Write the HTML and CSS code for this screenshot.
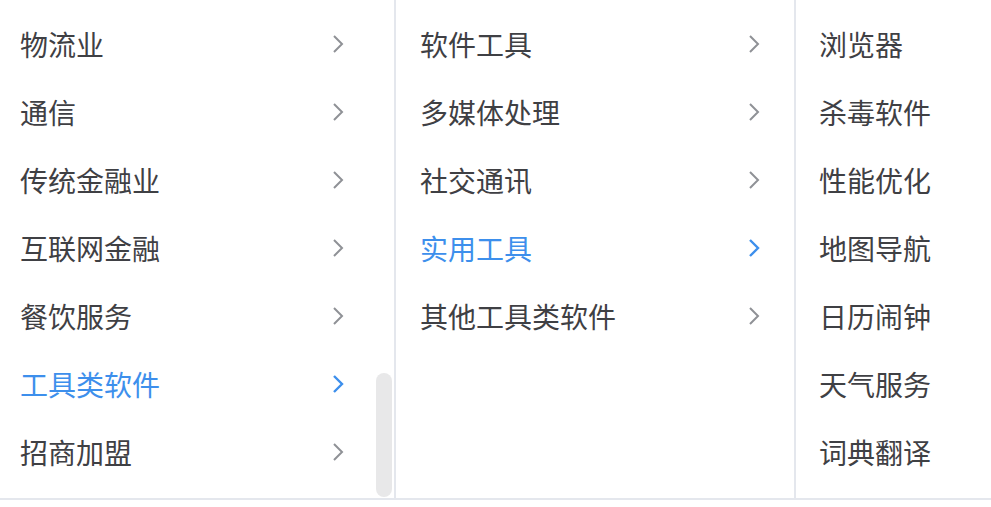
FILE: index.html
```html
<!DOCTYPE html>
<html>
    <head>
        <meta http-equiv='Content-Type' content='text/html; charset=UTF-8'>
        <title>Cascader</title>
        <link rel="stylesheet" href="styles.css">
    </head>
    <body>
        <div class='panel'>
            <div class='menu menu-1'>
                <ul class='list'>
                    <li class='node'><span>物流业</span><svg class='arrow' viewBox='0 0 12 20'><polyline points='2,2 10,10 2,18'/></svg></li>
                    <li class='node'><span>通信</span><svg class='arrow' viewBox='0 0 12 20'><polyline points='2,2 10,10 2,18'/></svg></li>
                    <li class='node'><span>传统金融业</span><svg class='arrow' viewBox='0 0 12 20'><polyline points='2,2 10,10 2,18'/></svg></li>
                    <li class='node'><span>互联网金融</span><svg class='arrow' viewBox='0 0 12 20'><polyline points='2,2 10,10 2,18'/></svg></li>
                    <li class='node'><span>餐饮服务</span><svg class='arrow' viewBox='0 0 12 20'><polyline points='2,2 10,10 2,18'/></svg></li>
                    <li class='node active'><span>工具类软件</span><svg class='arrow' viewBox='0 0 12 20'><polyline points='2,2 10,10 2,18'/></svg></li>
                    <li class='node'><span>招商加盟</span><svg class='arrow' viewBox='0 0 12 20'><polyline points='2,2 10,10 2,18'/></svg></li>
                </ul>
                <div class='thumb'></div>
            </div>
            <div class='menu menu-2'>
                <ul class='list'>
                    <li class='node'><span>软件工具</span><svg class='arrow' viewBox='0 0 12 20'><polyline points='2,2 10,10 2,18'/></svg></li>
                    <li class='node'><span>多媒体处理</span><svg class='arrow' viewBox='0 0 12 20'><polyline points='2,2 10,10 2,18'/></svg></li>
                    <li class='node'><span>社交通讯</span><svg class='arrow' viewBox='0 0 12 20'><polyline points='2,2 10,10 2,18'/></svg></li>
                    <li class='node active'><span>实用工具</span><svg class='arrow' viewBox='0 0 12 20'><polyline points='2,2 10,10 2,18'/></svg></li>
                    <li class='node'><span>其他工具类软件</span><svg class='arrow' viewBox='0 0 12 20'><polyline points='2,2 10,10 2,18'/></svg></li>
                </ul>
            </div>
            <div class='menu menu-3'>
                <ul class='list'>
                    <li class='node'><span>浏览器</span></li>
                    <li class='node'><span>杀毒软件</span></li>
                    <li class='node'><span>性能优化</span></li>
                    <li class='node'><span>地图导航</span></li>
                    <li class='node'><span>日历闹钟</span></li>
                    <li class='node'><span>天气服务</span></li>
                    <li class='node'><span>词典翻译</span></li>
                </ul>
            </div>
        </div>
    </body>
</html>
```

FILE: styles.css
```css
body {
    margin: 0;
    background: #fff;
    font-family: "Noto Sans CJK SC", "Noto Sans", sans-serif;
}
.panel {
    display: flex;
    height: 498px;
    border-bottom: 2px solid #e4e7ed;
}
.menu {
    position: relative;
    height: 100%;
    border-right: 2px solid #e4e7ed;
    box-sizing: border-box;
}
.menu-1 {
    width: 396px;
}
.menu-2 {
    width: 400px;
}
.menu-3 {
    flex: 1;
    border-right: none;
}
.list {
    list-style: none;
    margin: 0;
    padding: 10px 0 0 0;
}
.node {
    display: flex;
    align-items: center;
    justify-content: space-between;
    height: 68px;
    font-size: 28px;
    color: #3f4044;
}
.menu-1 .node {
    padding: 0 50px 0 20px;
}
.menu-2 .node {
    padding: 0 34px 0 24px;
}
.menu-3 .node {
    padding: 0 0 0 23px;
}
.node.active {
    color: #3d8fec;
}
.arrow {
    width: 12px;
    height: 20px;
    fill: none;
    stroke: #8f9196;
    stroke-width: 2;
}
.active .arrow {
    stroke: #3d8fec;
    stroke-width: 2.4;
}
.thumb {
    position: absolute;
    left: 376px;
    top: 373px;
    width: 16px;
    height: 124px;
    border-radius: 8px;
    background: #e8e8e9;
}
```
